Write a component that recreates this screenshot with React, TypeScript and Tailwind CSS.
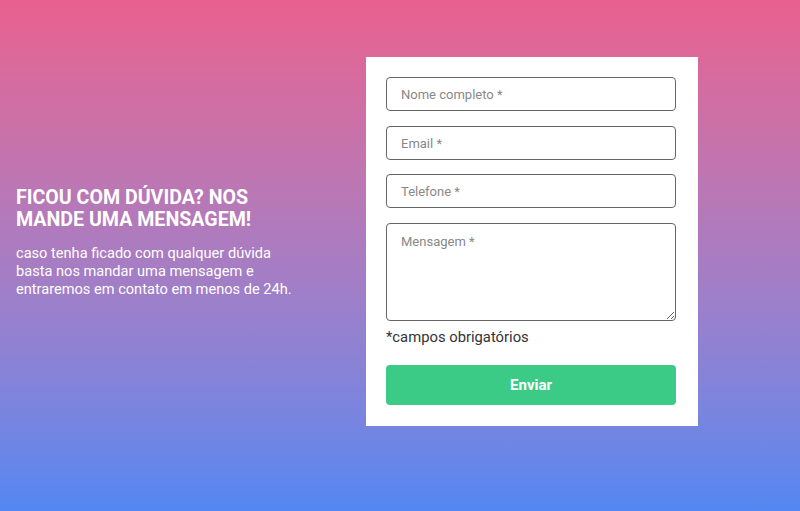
import React from 'react';

export default function App() {
  return (
    <div className="min-h-[511px] w-full bg-gradient-to-b from-[#e9608e] to-[#5287f1] font-['Roboto',sans-serif]">
      <div className="flex pt-[57px]">
        <div className="w-[366px] shrink-0 pl-4 pt-[130px]">
          <h2 className="text-[19.6px] leading-[22px] font-bold uppercase text-white">
            Ficou com dúvida? Nos <br /> mande uma mensagem!
          </h2>
          <p className="mt-[13px] text-[14.6px] leading-[18px] text-white">
            caso tenha ficado com qualquer dúvida <br />
            basta nos mandar uma mensagem e <br />
            entraremos em contato em menos de 24h.
          </p>
        </div>

        <form className="flex w-[332px] flex-col bg-white pl-5 pr-[22px] pt-5 pb-[21px]">
          <input
            placeholder="Nome completo *"
            className="h-[34px] rounded border border-[#666] px-[14px] text-[13px] text-[#333] placeholder:text-[#888] outline-none"
          />
          <input
            placeholder="Email *"
            className="mt-[15px] h-[34px] rounded border border-[#666] px-[14px] text-[13px] text-[#333] placeholder:text-[#888] outline-none"
          />
          <input
            placeholder="Telefone *"
            className="mt-[14px] h-[34px] rounded border border-[#666] px-[14px] text-[13px] text-[#333] placeholder:text-[#888] outline-none"
          />
          <textarea
            placeholder="Mensagem *"
            className="mt-[15px] h-[98px] rounded border border-[#666] px-[14px] py-[8px] text-[13px] text-[#333] placeholder:text-[#888] outline-none"
          />
          <span className="mt-[6px] text-[14.8px] leading-[20px] text-[#333]">*campos obrigatórios</span>
          <button
            type="button"
            className="mt-[18px] h-10 rounded bg-[#3ccb86] text-[15px] font-bold text-white"
          >
            Enviar
          </button>
        </form>
      </div>
    </div>
  );
}
